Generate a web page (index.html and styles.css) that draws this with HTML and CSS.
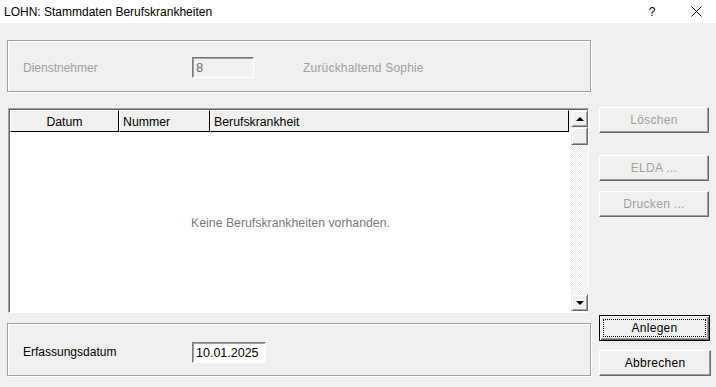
FILE: index.html
```html
<!DOCTYPE html>
<html lang="de">
<head>
    <meta charset="UTF-8">
    <title>LOHN: Stammdaten Berufskrankheiten</title>
    <link rel="stylesheet" href="styles.css">
</head>
<body>
    <div class="window">
        <div class="titlebar">
            <span class="title">LOHN: Stammdaten Berufskrankheiten</span>
            <span class="help">?</span>
            <span class="close">
                <svg width="11" height="11" viewBox="0 0 11 11">
                    <path d="M0.5 0.5 L10.5 10.5 M10.5 0.5 L0.5 10.5" stroke="#000" stroke-width="1" fill="none"/>
                </svg>
            </span>
        </div>

        <div class="client">
            <div class="main">
                <!-- Dienstnehmer -->
                <div class="group group-top">
                    <span class="label disabled">Dienstnehmer</span>
                    <div class="field field-disabled">8</div>
                    <span class="emp-name disabled">Zurückhaltend Sophie</span>
                </div>

                <!-- Liste -->
                <div class="list">
                    <div class="list-content">
                        <div class="list-header">
                            <div class="col col-datum">Datum</div>
                            <div class="col col-nummer">Nummer</div>
                            <div class="col col-beruf">Berufskrankheit</div>
                        </div>
                        <div class="list-body">
                            <span class="empty">Keine Berufskrankheiten vorhanden.</span>
                        </div>
                    </div>
                    <div class="scrollbar">
                        <div class="sb-btn"><span class="arrow-up"></span></div>
                        <div class="sb-thumb"></div>
                        <div class="sb-track"></div>
                        <div class="sb-btn"><span class="arrow-down"></span></div>
                    </div>
                </div>

                <!-- Erfassungsdatum -->
                <div class="group group-bottom">
                    <span class="label">Erfassungsdatum</span>
                    <div class="field field-date">10.01.2025</div>
                </div>
            </div>

            <div class="buttons">
                <button class="btn btn-loeschen" disabled>Löschen</button>
                <button class="btn btn-elda" disabled>ELDA ...</button>
                <button class="btn btn-drucken" disabled>Drucken ...</button>
                <button class="btn btn-default btn-anlegen"><span class="focus">Anlegen</span></button>
                <button class="btn btn-abbrechen">Abbrechen</button>
            </div>
        </div>
    </div>
</body>
</html>
```

FILE: styles.css
```css
body {
    margin: 0;
    padding: 0;
    background-color: #f0f0f0;
    font-family: "Liberation Sans", Arial, sans-serif;
    font-size: 12px;
    color: #000;
}

.window {
    width: 716px;
    height: 387px;
    overflow: hidden;
    background-color: #f0f0f0;
}

.titlebar {
    height: 23px;
    background-color: #fff;
    display: flex;
    align-items: center;
    font-family: "Liberation Sans", Arial, sans-serif;
    font-size: 12px;
}

.title {
    padding-left: 4px;
    padding-top: 1px;
    flex: 1;
}

.help {
    width: 14px;
    text-align: center;
    margin-right: 32px;
}

.close {
    display: flex;
    margin-right: 14px;
}

.client {
    display: flex;
    padding: 17px 0 0 7px;
}

.main {
    width: 584px;
}

.disabled {
    color: #a0a0a0;
}

.group {
    box-sizing: border-box;
    border: 1px solid #a0a0a0;
    box-shadow: inset 1px 1px 0 #fff, 1px 1px 0 #fff;
    display: flex;
    align-items: center;
    padding-left: 15px;
}

.group-top {
    height: 52px;
    padding-top: 3px;
}

.group-bottom {
    height: 53px;
    margin-top: 10px;
    padding-top: 5px;
}

.label {
    width: 169px;
}

.field {
    box-sizing: border-box;
    height: 21px;
    border: 1px solid;
    border-color: #7a7a7a #fff #fff #7a7a7a;
    box-shadow: inset 1px 1px 0 #a0a0a0;
    padding: 2px 0 0 3px;
    font-size: 13px;
}

.field-disabled {
    width: 62px;
    color: #6d6d6d;
    background-color: #f0f0f0;
}

.field-date {
    width: 74px;
    background-color: #fff;
    font-size: 12.5px;
    padding-top: 3px;
}

.emp-name {
    margin-left: 49px;
    letter-spacing: 0.2px;
}

/* Liste */
.list {
    box-sizing: border-box;
    width: 581px;
    height: 205px;
    margin: 16px 0 0 1px;
    border: 1px solid;
    border-color: #a0a0a0 #fff #fff #a0a0a0;
    box-shadow: inset 1px 1px 0 #696969;
    background-color: #fff;
    display: flex;
    padding: 1px 0 0 1px;
}

.list-content {
    flex: 1;
    display: flex;
    flex-direction: column;
}

.list-header {
    display: flex;
    height: 22px;
    background-color: #f0f0f0;
}

.col {
    box-sizing: border-box;
    border: 1px solid;
    border-color: #fff #000 #000 #fff;
    display: flex;
    align-items: center;
    padding-top: 1px;
    font-size: 12.3px;
}

.col-datum {
    width: 109px;
    justify-content: center;
}

.col-nummer {
    width: 91px;
    padding-left: 3px;
}

.col-beruf {
    width: 359px;
    padding-left: 3px;
}

.list-body {
    flex: 1;
    display: flex;
    align-items: center;
    justify-content: center;
}

.empty {
    color: #7a7a7a;
    padding-top: 2px;
    font-size: 12.3px;
}

.scrollbar {
    width: 17px;
    display: flex;
    flex-direction: column;
    margin-bottom: 1px;
}

.sb-btn,
.sb-thumb {
    box-sizing: border-box;
    height: 17px;
    background-color: #f0f0f0;
    border: 1px solid;
    border-color: #f0f0f0 #696969 #696969 #f0f0f0;
    box-shadow: inset 1px 1px 0 #fff, inset -1px -1px 0 #a0a0a0;
    display: flex;
    align-items: center;
    justify-content: center;
}

.sb-thumb {
    height: 18px;
}

.sb-track {
    flex: 1;
    background-color: #fff;
    background-image: conic-gradient(#e8e8e8 25%, #fff 0 50%, #e8e8e8 0 75%, #fff 0);
    background-size: 2px 2px;
}

.arrow-up {
    width: 0;
    height: 0;
    border-left: 4px solid transparent;
    border-right: 4px solid transparent;
    border-bottom: 4px solid #000;
}

.arrow-down {
    width: 0;
    height: 0;
    border-left: 4px solid transparent;
    border-right: 4px solid transparent;
    border-top: 4px solid #000;
}

/* Buttons */
.buttons {
    display: flex;
    flex-direction: column;
    margin-left: 8px;
    width: 111px;
}

.btn {
    box-sizing: border-box;
    height: 26px;
    width: 110px;
    padding: 0;
    background-color: #f0f0f0;
    border: 1px solid;
    border-color: #fff #696969 #696969 #fff;
    box-shadow: inset -1px -1px 0 #a0a0a0;
    font-family: "Liberation Sans", Arial, sans-serif;
    font-size: 12px;
    letter-spacing: 0.3px;
    color: #000;
}

.btn:disabled {
    color: #a0a0a0;
}

.btn-loeschen {
    margin-top: 67px;
}

.btn-elda {
    margin-top: 22px;
}

.btn-drucken {
    margin-top: 10px;
}

.btn-anlegen {
    margin-top: 98px;
    width: 111px;
}

.btn-abbrechen {
    margin-top: 9px;
    width: 112px;
}

.btn-default {
    border: 1px solid #000;
    box-shadow: inset 1px 1px 0 #fff, inset -1px -1px 0 #696969, inset -2px -2px 0 #a0a0a0;
    padding: 3px;
}

.focus {
    display: flex;
    align-items: center;
    justify-content: center;
    height: 100%;
    box-sizing: border-box;
    border: 1px dotted #000;
}
```
